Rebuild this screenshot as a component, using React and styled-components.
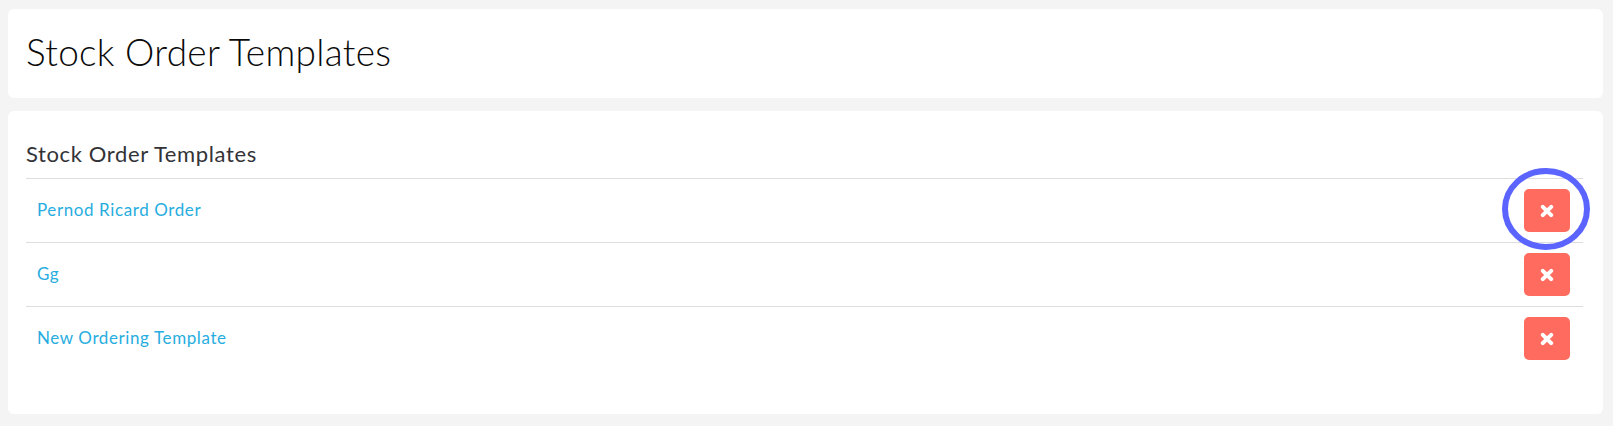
import React from "react";
import styled, { createGlobalStyle } from "styled-components";

const Global = createGlobalStyle`
  html, body { margin: 0; padding: 0; background: #f4f4f4; }
  body { font-family: "Lato", "Liberation Sans", sans-serif; }
`;

const Page = styled.div`
  display: flex;
  flex-direction: column;
  gap: 13px;
  padding: 9px 10px 12px 8px;
`;

const Card = styled.section`
  background: #fff;
  border-radius: 6px;
`;

const HeaderCard = styled(Card)`
  height: 89px;
  display: flex;
  align-items: center;
  padding: 0 19px;
`;

const PageTitle = styled.h1`
  margin: 0;
  font-size: 37px;
  font-weight: 300;
  color: #0a0a0a;
  letter-spacing: 0.3px;
  position: relative;
  top: -2px;
  left: -1px;
`;

const ListCard = styled(Card)`
  height: 303px;
  padding: 28px 20px 0 18px;
  box-sizing: border-box;
`;

const SectionTitle = styled.h2`
  margin: 0;
  height: 39px;
  line-height: 30px;
  font-size: 22px;
  font-weight: 400;
  letter-spacing: 0.62px;
  color: #333337;
`;

const Row = styled.div`
  display: flex;
  align-items: center;
  justify-content: space-between;
  border-top: 1px solid #dedede;
  padding: 10px 13px 10px 11px;
`;

const TemplateLink = styled.a`
  color: #27ade0;
  font-size: 17px;
  letter-spacing: 0.6px;
  text-decoration: none;
  position: relative;
  top: -1px;
`;

const DeleteWrap = styled.div`
  position: relative;
  display: flex;
`;

const DeleteButton = styled.button`
  width: 46px;
  height: 43px;
  border: 0;
  padding: 0;
  border-radius: 5px;
  background: #ff6b5e;
  display: flex;
  align-items: center;
  justify-content: center;
`;

const Ring = styled.svg`
  position: absolute;
  left: -22px;
  top: -21px;
  pointer-events: none;
`;

const Cross = () => (
  <svg width="14" height="14" viewBox="0 0 14 14">
    <path d="M2.8 2.8 L11.2 11.2 M11.2 2.8 L2.8 11.2" stroke="#fff" strokeWidth="4" strokeLinecap="round" />
  </svg>
);

const templates = ["Pernod Ricard Order", "Gg", "New Ordering Template"];

export default function App() {
  return (
    <>
      <Global />
      <Page>
        <HeaderCard>
          <PageTitle>Stock Order Templates</PageTitle>
        </HeaderCard>
        <ListCard>
          <SectionTitle>Stock Order Templates</SectionTitle>
          {templates.map((name, i) => (
            <Row key={name}>
              <TemplateLink href="#">{name}</TemplateLink>
              <DeleteWrap>
                <DeleteButton aria-label={`Delete ${name}`}>
                  <Cross />
                </DeleteButton>
                {i === 0 && (
                  <Ring width="88" height="82" viewBox="0 0 88 82">
                    <ellipse cx="44" cy="41" rx="41" ry="38" fill="none" stroke="#5b64ff" strokeWidth="6" />
                  </Ring>
                )}
              </DeleteWrap>
            </Row>
          ))}
        </ListCard>
      </Page>
    </>
  );
}
